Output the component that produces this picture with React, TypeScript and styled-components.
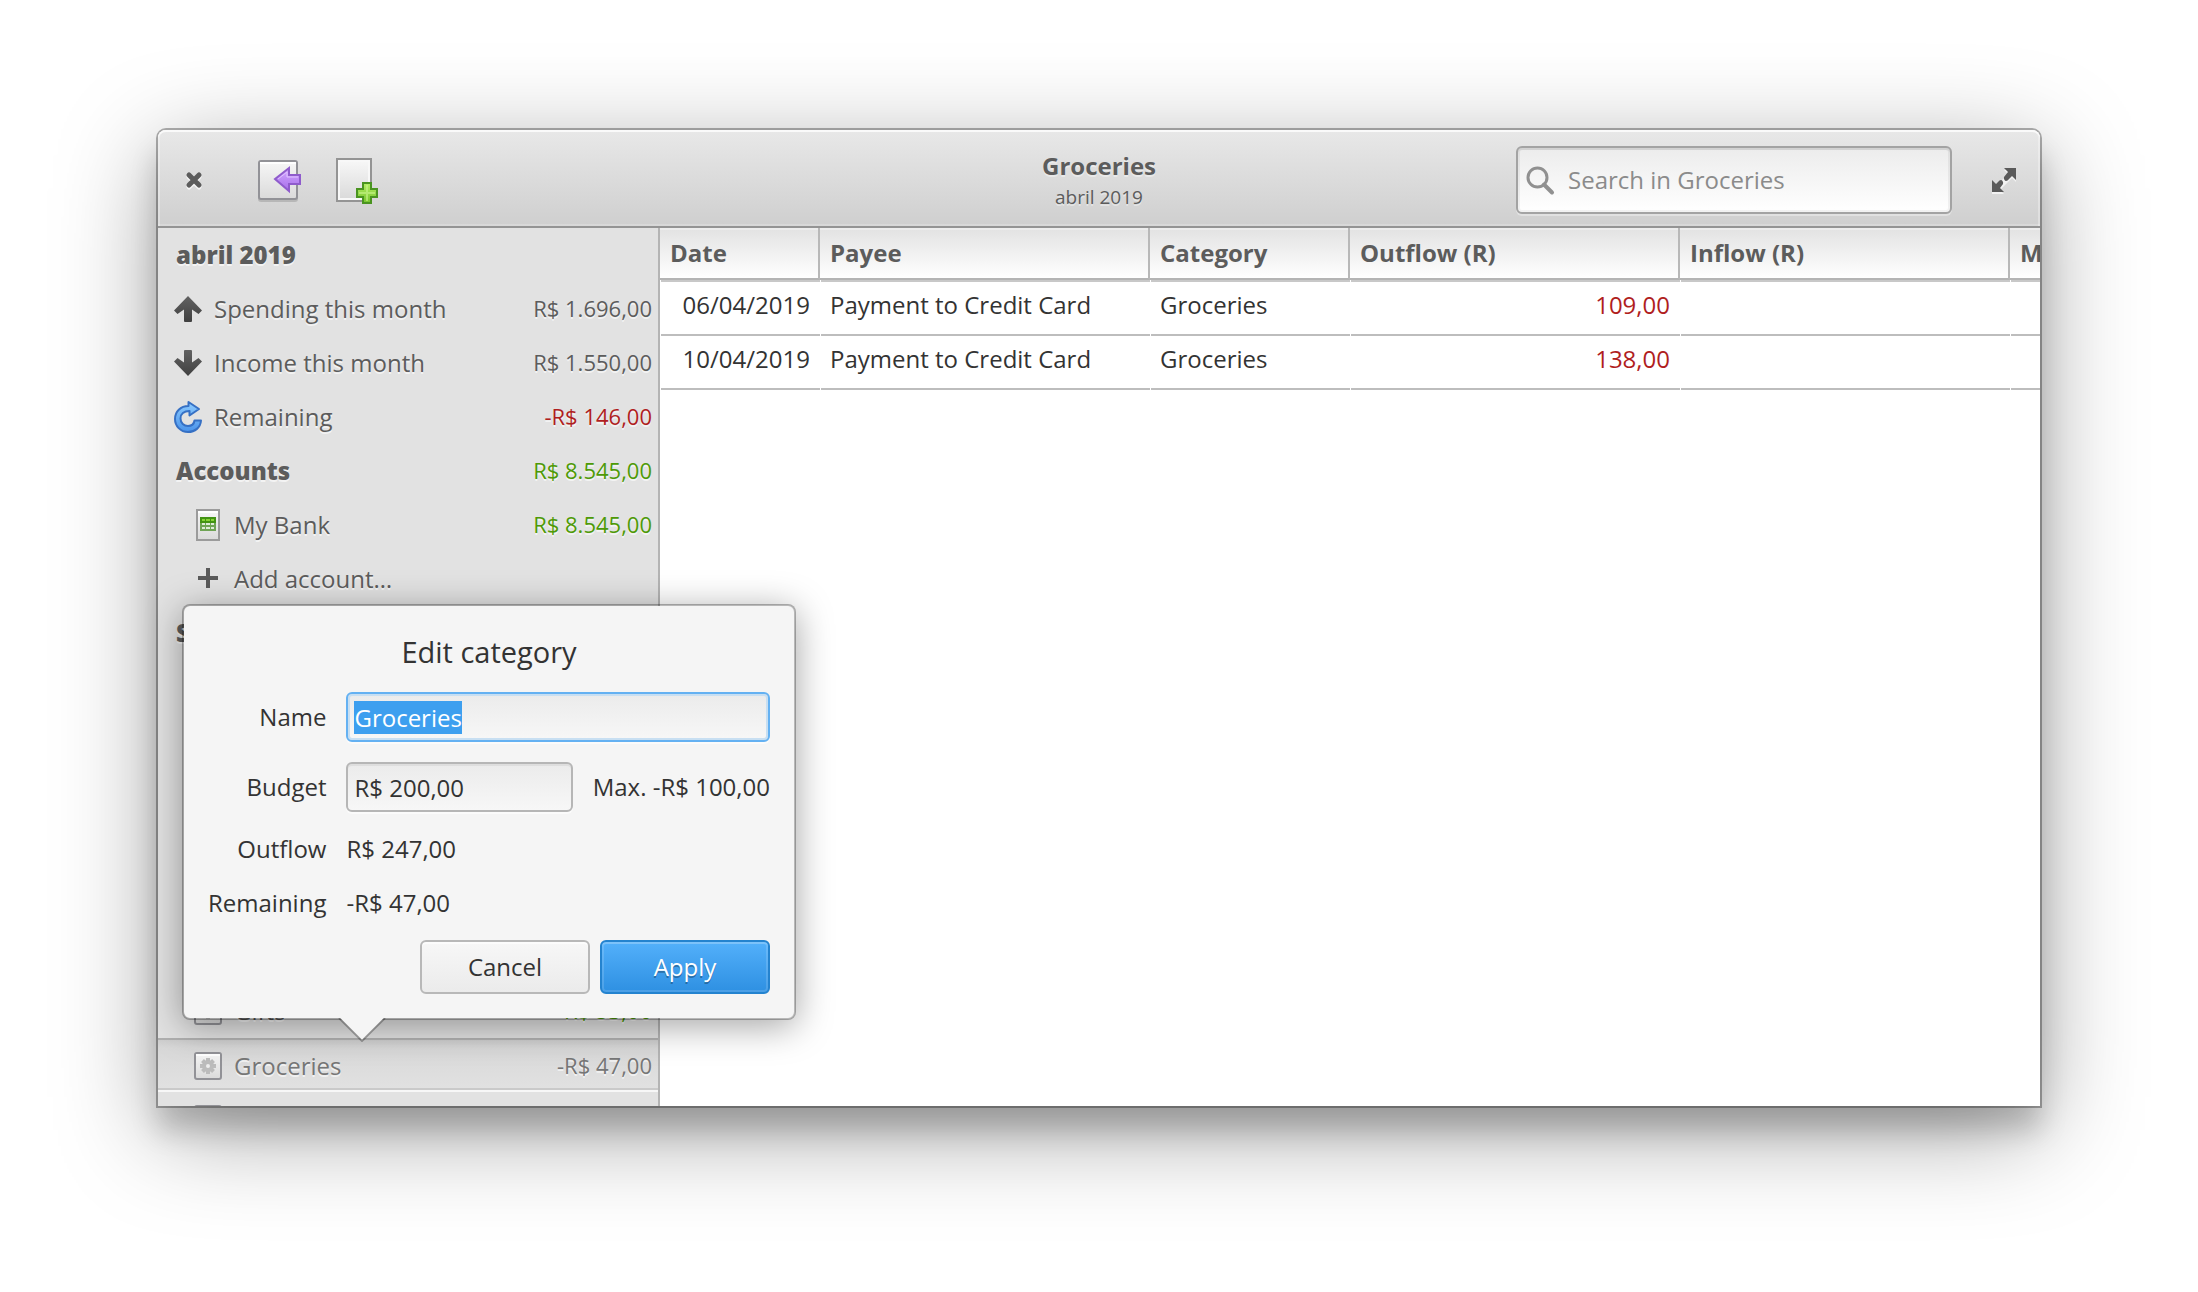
import React, { useEffect, useRef } from "react";
import styled, { createGlobalStyle, css } from "styled-components";

const GlobalStyle = createGlobalStyle`
  *, *::before, *::after { box-sizing: border-box; }
  html, body { margin: 0; background: #fff; }
  body, button, input, table {
    font-family: "Open Sans", "Noto Sans", sans-serif;
    font-size: 24px;
    line-height: 34px;
    color: #333;
  }
  button { cursor: pointer; }
`;

const Desktop = styled.div`
  display: flex;
  height: 100vh;
  padding: 130px 158px 186px;
  overflow: hidden;
`;

const Window = styled.div`
  display: flex;
  flex: 1;
  flex-direction: column;
  min-width: 0;
  border-radius: 8px 8px 0 0;
  box-shadow:
    0 0 0 2px rgba(0, 0, 0, 0.3),
    0 24px 28px rgba(0, 0, 0, 0.18),
    0 24px 100px rgba(0, 0, 0, 0.38);
`;

/* ---- header bar ---- */

const HeaderBar = styled.header`
  display: grid;
  grid-template-columns: 1fr auto 1fr;
  align-items: center;
  height: 98px;
  padding: 4px 12px 0;
  border-bottom: 2px solid #949494;
  border-radius: 8px 8px 0 0;
  background: linear-gradient(#e8e8e8, #cfcfcf);
  box-shadow:
    inset 0 2px 0 #fafafa,
    inset 2px 0 0 rgba(255, 255, 255, 0.3),
    inset -2px 0 0 rgba(255, 255, 255, 0.3),
    inset 0 -2px 0 rgba(255, 255, 255, 0.2);
`;

const HeaderStart = styled.div`
  display: flex;
  align-items: center;
  gap: 30px;
`;

const HeaderEnd = styled.div`
  display: flex;
  align-items: center;
  justify-content: flex-end;
  gap: 28px;
`;

const ToolButton = styled.button<{ $close?: boolean }>`
  width: 48px;
  height: 48px;
  padding: 0;
  border: 0;
  background: none;
  ${(p) => p.$close && css`margin-right: 6px;`}

  svg { display: block; }
`;

const Titles = styled.div`
  text-align: center;
  color: #5c5c5c;
  text-shadow: 0 2px 0 rgba(255, 255, 255, 0.4);
`;

const Title = styled.h1`
  margin: 0;
  font-size: 24px;
  font-weight: 700;
  line-height: 34px;
`;

const Subtitle = styled.p`
  margin: 0;
  font-size: 19px;
  line-height: 28px;
`;

const SearchBox = styled.label`
  display: flex;
  align-items: center;
  gap: 8px;
  width: 436px;
  height: 68px;
  padding: 0 8px;
  border: 2px solid #a3a3a3;
  border-radius: 6px;
  background: linear-gradient(#ececec, #fff);
  box-shadow:
    inset 0 2px 0 #d2d2d2,
    inset 0 0 0 2px rgba(0, 0, 0, 0.05),
    0 2px 0 rgba(255, 255, 255, 0.35);

  input {
    flex: 1;
    min-width: 0;
    padding: 0;
    border: 0;
    outline: 0;
    background: none;
  }
  input::placeholder { color: #8b8b8b; opacity: 1; }
`;

/* ---- body ---- */

const Body = styled.div`
  position: relative;
  display: flex;
  flex: 1;
  min-height: 0;
`;

const Sidebar = styled.nav`
  flex: none;
  width: 502px;
  overflow: hidden;
  border-right: 2px solid #b4b4b4;
  background: #e2e2e2;
  color: #5c5c5c;
`;

const Row = styled.div<{ $level?: number; $selected?: boolean }>`
  display: flex;
  align-items: center;
  gap: 10px;
  height: 54px;
  padding: 0 6px 0 ${(p) => 14 + (p.$level ?? 0) * 20}px;
  text-shadow: 0 2px 0 rgba(255, 255, 255, 0.6);

  svg { flex: none; }

  ${(p) =>
    p.$selected &&
    css`
      color: #767676;
      border-top: 2px solid #b0b0b0;
      background:
        linear-gradient(#f7f7f7, #f7f7f7) 0 100% / 100% 2px no-repeat,
        linear-gradient(#cacaca, #cacaca) 0 calc(100% - 2px) / 100% 2px no-repeat,
        linear-gradient(#cecece, #d8d8d8 8px, #e2e2e2);
    `}
`;

const Heading = styled.h2`
  flex: 1;
  margin: 0;
  padding-left: 4px;
  font-size: 24px;
  font-weight: 800;
  line-height: 34px;
`;

const Label = styled.span`
  flex: 1;
`;

const Amount = styled.span<{ $tone?: "good" | "bad" }>`
  font-size: 22px;
  line-height: 30px;
  padding-bottom: 2px;
  ${(p) => p.$tone === "good" && css`color: #4e9a06;`}
  ${(p) => p.$tone === "bad" && css`color: #b01e1e;`}
`;

const Covered = styled.div`
  height: 324px;
`;

/* ---- ledger ---- */

const Content = styled.main`
  flex: 1;
  min-width: 0;
  overflow: hidden;
  background: #fff;
`;

const Ledger = styled.table`
  width: 100%;
  table-layout: fixed;
  border-collapse: separate;
  border-spacing: 0;

  th {
    height: 52px;
    padding: 0 0 0 10px;
    overflow: hidden;
    border-right: 2px solid #b8b8b8;
    border-bottom: 2px solid #b4b4b4;
    background: linear-gradient(#e2e2e2, #fff);
    box-shadow: inset 0 2px 0 #ededed;
    color: #5c5c5c;
    font-weight: 700;
    text-align: left;
    white-space: nowrap;
  }
  th:last-child { border-right: 0; }

  td {
    height: 54px;
    padding: 6px 10px 14px;
    background: linear-gradient(#bdbdbd, #bdbdbd) 1px 100% / 100% 2px no-repeat;
    vertical-align: top;
    white-space: nowrap;
  }
  tbody tr:first-child td {
    height: 56px;
    padding-top: 8px;
    background:
      linear-gradient(#c8c8c8, #c8c8c8) 1px 0 / 100% 2px no-repeat,
      linear-gradient(#bdbdbd, #bdbdbd) 1px 100% / 100% 2px no-repeat;
  }
`;

const Column = styled.col<{ $width?: number }>`
  ${(p) => p.$width && css`width: ${p.$width}px;`}
`;

const Cell = styled.td<{ $end?: boolean; $bad?: boolean }>`
  ${(p) => p.$end && css`text-align: right;`}
  ${(p) => p.$bad && css`color: #b01e1e;`}
`;

/* ---- popover ---- */

const Popover = styled.form`
  position: absolute;
  left: 24px;
  top: 376px;
  width: 614px;
  padding: 26px 24px 24px;
  border: 2px solid rgba(0, 0, 0, 0.28);
  border-radius: 8px;
  background: #f5f5f5;
  background-clip: padding-box;
  box-shadow: 0 6px 36px rgba(0, 0, 0, 0.36);
`;

const Pointer = styled.svg`
  position: absolute;
  left: 154px;
  top: 100%;
`;

const PopoverTitle = styled.h2`
  margin: 0 0 20px;
  font-size: 29px;
  font-weight: 400;
  line-height: 40px;
  text-align: center;
`;

const Fields = styled.div`
  display: grid;
  grid-template-columns: auto 1fr;
  align-items: center;
  gap: 20px;
`;

const FieldLabel = styled.label`
  text-align: right;
`;

const Entry = styled.input<{ $focus?: boolean }>`
  width: 100%;
  height: 50px;
  padding: 0 6px;
  border: 2px solid ${(p) => (p.$focus ? "#64b1f2" : "#b6b6b6")};
  border-radius: 6px;
  outline: 0;
  background: linear-gradient(#ebebeb, #f7f7f7);
  box-shadow:
    ${(p) => (p.$focus ? "inset 0 0 0 2px #c8dff2" : "inset 0 2px 0 #dedede")},
    0 2px 0 rgba(255, 255, 255, 0.6);

  &::selection { color: #fff; background: #3d9fef; }
`;

const Budget = styled.div`
  display: flex;
  align-items: center;
  gap: 20px;
  white-space: nowrap;
`;

const Actions = styled.div`
  display: flex;
  justify-content: flex-end;
  gap: 10px;
  margin-top: 20px;
`;

const Action = styled.button<{ $primary?: boolean }>`
  width: 170px;
  height: 54px;
  padding: 0;
  border: 2px solid #b8b8b8;
  border-radius: 6px;
  background: linear-gradient(#f7f7f7, #ebebeb);
  box-shadow: inset 0 2px 0 #fcfcfc;

  ${(p) =>
    p.$primary &&
    css`
      border-color: #2483cf;
      background: linear-gradient(#53b0fb, #2e90e2);
      box-shadow: inset 0 2px 0 #7cc2fa, inset 0 0 0 2px rgba(255, 255, 255, 0.14);
      color: #fff;
      text-shadow: 0 2px 0 rgba(0, 0, 0, 0.3);
    `}
`;

/* ---- icons ---- */

const CloseIcon = () => (
  <svg width="48" height="48" viewBox="0 0 48 48" fill="none" strokeWidth="5">
    <path d="M19 21l10 10M29 21L19 31" stroke="#f4f4f4" strokeLinecap="round" />
    <path d="M19 19l10 10M29 19L19 29" stroke="#5c5c5c" strokeLinecap="round" />
  </svg>
);

const ReturnIcon = () => (
  <svg width="48" height="48" viewBox="0 0 48 48">
    <defs>
      <linearGradient id="paper" x1="0" y1="0" x2="0" y2="1">
        <stop offset="0" stopColor="#f7f7f7" />
        <stop offset="1" stopColor="#dadada" />
      </linearGradient>
      <linearGradient id="violet" x1="0" y1="0" x2="0" y2="1">
        <stop offset="0" stopColor="#d3a6ff" />
        <stop offset="1" stopColor="#a66fea" />
      </linearGradient>
    </defs>
    <rect x="4" y="6" width="40" height="40" rx="3" fill="#000" opacity="0.14" />
    <rect x="5" y="5" width="38" height="38" rx="2" fill="url(#paper)" stroke="#929297" strokeWidth="2" />
    <path d="M6 7h36" stroke="#fff" strokeWidth="2" />
    <path d="M21 23L35 12v7h11v9H35v7z" fill="url(#violet)" stroke="#8f5ccc" strokeWidth="2" />
    <path d="M24 23l9-7v5h11" fill="none" stroke="#e0c3ff" strokeWidth="1" />
  </svg>
);

const NewIcon = () => (
  <svg width="48" height="48" viewBox="0 0 48 48">
    <defs>
      <linearGradient id="lime" x1="0" y1="0" x2="0" y2="1">
        <stop offset="0" stopColor="#b5ee65" />
        <stop offset="1" stopColor="#74c42c" />
      </linearGradient>
    </defs>
    <rect x="5" y="3" width="34" height="42" fill="#ececec" stroke="#949494" strokeWidth="2" />
    <rect x="7" y="5" width="30" height="38" fill="url(#paper)" stroke="#f8f8f8" strokeWidth="2" />
    <path d="M31 27h8v6h6v8h-6v6h-8v-6h-6v-8h6z" fill="url(#lime)" stroke="#4a9420" strokeWidth="2" />
    <path d="M35 29v16M27 37h16" stroke="#c9f58c" strokeWidth="2" opacity="0.6" />
  </svg>
);

const SearchIcon = () => (
  <svg width="34" height="34" viewBox="0 0 34 34" fill="none" stroke="#909090">
    <circle cx="11.500" cy="14.500" r="9.500" strokeWidth="3" />
    <path d="M18 21.500L26 29.500" strokeWidth="4" strokeLinecap="round" />
  </svg>
);

const FullscreenIcon = () => (
  <svg width="48" height="48" viewBox="0 0 48 48" fill="#5a5a5a">
    <g fill="#f2f2f2">
      <path d="M24 14h12v12l-4-4-6 6-4-4 6-6zM12 26l4 4 6-6 4 4-6 6 4 4H12z" />
    </g>
    <path d="M24 12h12v12l-4-4-4.500 4.500q-2 1-3-.5t-.5-3L28 16zM12 24l4 4 3.500-3.500q2-1 3 .5t.5 3L20 32l4 4H12z" />
  </svg>
);

const Dark = () => (
  <linearGradient id="dark" x1="0" y1="0" x2="0" y2="1">
    <stop offset="0" stopColor="#626262" />
    <stop offset="1" stopColor="#404040" />
  </linearGradient>
);

const UpIcon = () => (
  <svg width="32" height="32" viewBox="0 0 32 32">
    <defs><Dark /></defs>
    <path d="M16 3L30 17.500l-3.500 3.500L20 16.500V28q0 1-1 1h-6q-1 0-1-1V16.500L5.500 21 2 17.500z" fill="url(#dark)" />
  </svg>
);

const DownIcon = () => (
  <svg width="32" height="32" viewBox="0 0 32 32">
    <path d="M16 29L30 14.500 26.500 11 20 15.500V4q0-1-1-1h-6q-1 0-1 1v11.500L5.500 11 2 14.500z" fill="url(#dark)" />
  </svg>
);

const RemainingIcon = () => (
  <svg width="32" height="32" viewBox="0 0 32 32">
    <defs>
      <linearGradient id="blue" x1="0" y1="0" x2="0" y2="1">
        <stop offset="0" stopColor="#8ccbff" />
        <stop offset="1" stopColor="#4a93ea" />
      </linearGradient>
    </defs>
    <path
      d="M16.500 1L27 8l-9.500 6.500V10C12 10 8.500 13 8.500 17.500c0 4.500 3.500 7.500 7.500 7.500 3.500 0 6-2 6.500-5.500H29C28.500 26.500 23 31 16 31 8.500 31 3 25 3 18 3 10.500 8.500 5 16.500 5z"
      fill="url(#blue)"
      stroke="#3670c4"
      strokeWidth="2"
      strokeLinejoin="round"
    />
  </svg>
);

const SheetIcon = () => (
  <svg width="32" height="32" viewBox="0 0 32 32">
    <rect x="5" y="1" width="22" height="30" fill="url(#paper)" stroke="#9b9b9b" strokeWidth="2" />
    <path d="M6 3h20" stroke="#fff" strokeWidth="2" />
    <rect x="8" y="8" width="16" height="14" fill="#6fa455" />
    <rect x="8" y="8" width="16" height="6" fill="#429313" />
    <path d="M10 11h3M14 11h4M19 11h3" stroke="#86d436" strokeWidth="2" />
    <path d="M10 15h3M14 15h4M19 15h3M10 19h3M14 19h4M19 19h3" stroke="#deebd8" strokeWidth="2" />
  </svg>
);

const PlusIcon = () => (
  <svg width="32" height="32" viewBox="0 0 32 32" strokeWidth="4">
    <path d="M16 5v20M6 15h20" stroke="#5a5a5a" />
  </svg>
);

const GearIcon = () => (
  <svg width="32" height="32" viewBox="0 0 32 32">
    <rect x="3" y="3" width="26" height="26" rx="2" fill="url(#paper)" stroke="#929297" strokeWidth="2" />
    <path d="M4 5h24" stroke="#fff" strokeWidth="2" />
    <g stroke="#bcbcbc" strokeWidth="4">
      <path d="M16 8v16M8 16h16M10.500 10.500l11 11M21.500 10.500l-11 11" />
    </g>
    <circle cx="16" cy="16" r="4" fill="#eee" stroke="#bcbcbc" strokeWidth="4" />
  </svg>
);

const summary = [
  { label: "Spending this month", amount: "R$ 1.696,00", icon: <UpIcon /> },
  { label: "Income this month", amount: "R$ 1.550,00", icon: <DownIcon /> },
  { label: "Remaining", amount: "-R$ 146,00", icon: <RemainingIcon />, tone: "bad" as const },
];

const columns = [
  { name: "Date", width: 160 },
  { name: "Payee", width: 330 },
  { name: "Category", width: 200 },
  { name: "Outflow (R)", width: 330 },
  { name: "Inflow (R)", width: 330 },
  { name: "Memo" },
];

const payments = [
  { date: "06/04/2019", payee: "Payment to Credit Card", category: "Groceries", outflow: "109,00" },
  { date: "10/04/2019", payee: "Payment to Credit Card", category: "Groceries", outflow: "138,00" },
];

export default function App() {
  const nameRef = useRef<HTMLInputElement>(null);

  useEffect(() => {
    nameRef.current?.focus();
    nameRef.current?.select();
  }, []);

  return (
    <>
      <GlobalStyle />
      <Desktop>
        <Window>
          <HeaderBar>
            <HeaderStart>
              <ToolButton $close aria-label="Close"><CloseIcon /></ToolButton>
              <ToolButton aria-label="Import"><ReturnIcon /></ToolButton>
              <ToolButton aria-label="New transaction"><NewIcon /></ToolButton>
            </HeaderStart>
            <Titles>
              <Title>Groceries</Title>
              <Subtitle>abril 2019</Subtitle>
            </Titles>
            <HeaderEnd>
              <SearchBox>
                <SearchIcon />
                <input type="text" aria-label="Search" placeholder="Search in Groceries" />
              </SearchBox>
              <ToolButton aria-label="Fullscreen"><FullscreenIcon /></ToolButton>
            </HeaderEnd>
          </HeaderBar>

          <Body>
            <Sidebar>
              <Row><Heading>abril 2019</Heading></Row>
              {summary.map((s) => (
                <Row key={s.label}>
                  {s.icon}
                  <Label>{s.label}</Label>
                  <Amount $tone={s.tone}>{s.amount}</Amount>
                </Row>
              ))}
              <Row>
                <Heading>Accounts</Heading>
                <Amount $tone="good">R$ 8.545,00</Amount>
              </Row>
              <Row $level={1}>
                <SheetIcon />
                <Label>My Bank</Label>
                <Amount $tone="good">R$ 8.545,00</Amount>
              </Row>
              <Row $level={1}>
                <PlusIcon />
                <Label>Add account…</Label>
              </Row>
              <Row><Heading>Spending</Heading></Row>
              <Covered />
              <Row $level={1}>
                <GearIcon />
                <Label>Gifts</Label>
                <Amount $tone="good">R$ 53,00</Amount>
              </Row>
              <Row $level={1} $selected>
                <GearIcon />
                <Label>Groceries</Label>
                <Amount>-R$ 47,00</Amount>
              </Row>
              <Row $level={1}><GearIcon /></Row>
            </Sidebar>

            <Content>
              <Ledger>
                <colgroup>
                  {columns.map((c) => <Column key={c.name} $width={c.width} />)}
                </colgroup>
                <thead>
                  <tr>{columns.map((c) => <th key={c.name} scope="col">{c.name}</th>)}</tr>
                </thead>
                <tbody>
                  {payments.map((p) => (
                    <tr key={p.date}>
                      <Cell $end>{p.date}</Cell>
                      <Cell>{p.payee}</Cell>
                      <Cell>{p.category}</Cell>
                      <Cell $end $bad>{p.outflow}</Cell>
                      <Cell />
                      <Cell />
                    </tr>
                  ))}
                </tbody>
              </Ledger>
            </Content>

            <Popover onSubmit={(e) => e.preventDefault()}>
              <PopoverTitle>Edit category</PopoverTitle>
              <Fields>
                <FieldLabel htmlFor="name">Name</FieldLabel>
                <Entry id="name" ref={nameRef} $focus defaultValue="Groceries" />
                <FieldLabel htmlFor="budget">Budget</FieldLabel>
                <Budget>
                  <Entry id="budget" defaultValue="R$ 200,00" />
                  <span>Max. -R$ 100,00</span>
                </Budget>
                <FieldLabel as="span">Outflow</FieldLabel>
                <span>R$ 247,00</span>
                <FieldLabel as="span">Remaining</FieldLabel>
                <span>-R$ 47,00</span>
              </Fields>
              <Actions>
                <Action type="button">Cancel</Action>
                <Action type="submit" $primary>Apply</Action>
              </Actions>
              <Pointer width="48" height="24" viewBox="0 0 48 24">
                <path d="M2 0h44L24 22z" fill="#f5f5f5" />
                <path d="M1 0l23 23L47 0" fill="none" stroke="#000" strokeOpacity="0.28" strokeWidth="2" />
              </Pointer>
            </Popover>
          </Body>
        </Window>
      </Desktop>
    </>
  );
}
